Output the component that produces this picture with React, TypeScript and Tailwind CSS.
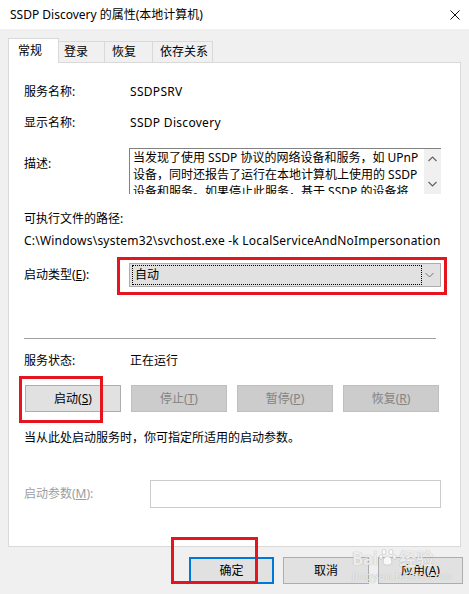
import { ReactNode } from "react";

const FONT = '"Noto Sans", "Noto Sans CJK SC", sans-serif';

function Tab({ label, active, className }: { label: string; active?: boolean; className: string }) {
  return (
    <div
      className={
        active
          ? `relative z-10 -mb-px h-[25px] bg-white border border-[#d9d9d9] border-b-0 flex items-center ${className}`
          : `h-[21px] bg-[#f0f0f0] border border-[#d9d9d9] border-b-0 border-l-0 flex items-center ${className}`
      }
    >
      <span className="text-[12px] leading-none text-black">{label}</span>
    </div>
  );
}

function Btn({
  children,
  disabled,
  className = "w-[96px]",
}: {
  children: ReactNode;
  disabled?: boolean;
  className?: string;
}) {
  return (
    <div
      className={`h-[27px] flex items-center justify-center text-[12px] border ${
        disabled ? "bg-[#cccccc] border-[#bfbfbf] text-[#838383]" : "bg-[#e1e1e1] border-[#adadad] text-black"
      } ${className}`}
    >
      {children}
    </div>
  );
}

function Chevron({ up }: { up?: boolean }) {
  return (
    <svg width="9" height="6" viewBox="0 0 9 6" className="block">
      <path d={up ? "M0.5 5 L4.5 1 L8.5 5" : "M0.5 1 L4.5 5 L8.5 1"} fill="none" stroke="#606060" strokeWidth="1.1" />
    </svg>
  );
}

export default function App() {
  return (
    <div
      className="relative w-[469px] h-[594px] overflow-hidden bg-[#f0f0f0] text-black"
      style={{ fontFamily: FONT }}
    >
      {/* Title bar */}
      <div className="h-[29px] bg-white flex items-center justify-between pl-[10px] pr-[9px]">
        <span className="text-[12px]">SSDP Discovery 的属性(本地计算机)</span>
        <svg width="10" height="10" viewBox="0 0 10 10">
          <path d="M0.5 0.5 L9.5 9.5 M9.5 0.5 L0.5 9.5" stroke="#111" strokeWidth="1" />
        </svg>
      </div>

      {/* Tabs */}
      <div className="mt-[9px] pl-[8px] flex items-end h-[24px]">
        <Tab label="常规" active className="w-[51px] pl-[9px]" />
        <Tab label="登录" className="w-[46px] pl-[5px]" />
        <Tab label="恢复" className="w-[48px] pl-[7px]" />
        <Tab label="依存关系" className="w-[60px] pl-[7px]" />
      </div>

      {/* Panel */}
      <div className="mx-[8px] h-[485px] bg-white border border-[#d9d9d9] pl-[15px] text-[12px] flex flex-col">
        <div className="mt-[19px] h-[20px] flex items-center">
          <span className="w-[106px]">服务名称:</span>
          <span className="tracking-[0.3px]">SSDPSRV</span>
        </div>
        <div className="mt-[11px] h-[20px] flex items-center">
          <span className="w-[106px]">显示名称:</span>
          <span className="tracking-[0.3px]">SSDP Discovery</span>
        </div>

        <div className="mt-[15px] flex items-start">
          <span className="w-[105px] pt-[7px] leading-[18px]">描述:</span>
          <div className="w-[312px] h-[46px] border-t border-l border-[#828282] flex overflow-hidden">
            <div className="flex-1 pl-[3px] leading-[17px] text-[12px] whitespace-nowrap overflow-hidden">
              <div>当发现了使用 SSDP 协议的网络设备和服务，如 UPnP</div>
              <div>设备，同时还报告了运行在本地计算机上使用的 SSDP</div>
              <div>设备和服务。如果停止此服务，基于 SSDP 的设备将</div>
            </div>
            <div className="w-[17px] bg-[#f0f0f0] flex flex-col items-center justify-between pt-[7px] pb-[7px]">
              <Chevron up />
              <Chevron />
            </div>
          </div>
        </div>

        <div className="mt-[15px] h-[20px] flex items-center">可执行文件的路径:</div>
        <div className="mt-[2px] h-[20px] flex items-center whitespace-nowrap tracking-[0.22px]">
          C:\Windows\system32\svchost.exe -k LocalServiceAndNoImpersonation
        </div>

        <div className="mt-[12px] flex items-center">
          <span className="w-[105px]">
            启动类型(<u>E</u>):
          </span>
          <div className="w-[312px] h-[24px] bg-[#e1e1e1] border border-[#adadad] flex items-center pl-[2px] pr-[6px]">
            <div className="w-[290px] h-[20px] border border-dotted border-black flex items-center pl-[2px]">
              自动
            </div>
            <div className="flex-1 flex justify-end">
              <svg width="9" height="6" viewBox="0 0 9 6">
                <path d="M0.5 1 L4.5 5 L8.5 1" fill="none" stroke="#777" strokeWidth="1" />
              </svg>
            </div>
          </div>
        </div>

        <div className="mt-[51px] w-[412px] h-px bg-[#a0a0a0]" />

        <div className="mt-[12px] h-[20px] flex items-center">
          <span className="w-[106px]">服务状态:</span>
          <span>正在运行</span>
        </div>

        <div className="mt-[14px] pl-[1px] flex gap-[10px]">
          <Btn>
            启动(<u>S</u>)
          </Btn>
          <Btn disabled>
            停止(<u>T</u>)
          </Btn>
          <Btn disabled>
            暂停(<u>P</u>)
          </Btn>
          <Btn disabled>
            恢复(<u>R</u>)
          </Btn>
        </div>

        <div className="mt-[16px] h-[20px] flex items-center">当从此处启动服务时，你可指定所适用的启动参数。</div>

        <div className="mt-[32px] flex items-center">
          <span className="w-[126px] text-[#9d9d9d]">
            启动参数(<u>M</u>):
          </span>
          <div className="w-[291px] h-[28px] border border-[#cccccc] bg-white" />
        </div>
      </div>

      {/* Bottom buttons */}
      <div className="mt-[10px] pl-[189px] flex gap-[9px] text-[12px]">
        <div className="w-[85px] h-[27px] bg-[#e1e1e1] border-2 border-[#0078d7] flex items-center justify-center">
          确定
        </div>
        <Btn className="w-[86px]">取消</Btn>
        <Btn className="w-[85px]">
          应用(<u>A</u>)
        </Btn>
      </div>

      {/* Watermark */}
      <div className="absolute left-[352px] top-[548px] pointer-events-none select-none text-white/80 [text-shadow:0_0_1px_#9a9a9a]">
        <div className="flex items-end gap-[2px]">
          <span className="text-[17px] font-bold leading-none tracking-tight">Bai</span>
          <svg width="18" height="18" viewBox="0 0 18 18" className="mb-[1px]">
            <g fill="#ffffff" fillOpacity="0.8" stroke="#b0b0b0" strokeWidth="0.5">
              <ellipse cx="5" cy="4" rx="2" ry="2.6" />
              <ellipse cx="12" cy="4" rx="2" ry="2.6" />
              <ellipse cx="2" cy="9" rx="1.8" ry="2.3" />
              <ellipse cx="15.5" cy="9" rx="1.8" ry="2.3" />
              <path d="M8.5 8 C5 8 3.5 13 4.5 15.5 C5.5 17.5 11.5 17.5 12.5 15.5 C13.5 13 12 8 8.5 8 Z" />
            </g>
          </svg>
          <span className="text-[17px] font-bold leading-none">经验</span>
        </div>
        <div className="text-[11px] leading-none mt-[3px] tracking-wide">jingyan.baidu.com</div>
      </div>

      {/* Red annotation boxes */}
      <div className="absolute left-[117px] top-[257px] w-[330px] h-[38px] border-[3px] border-[#e5141f] pointer-events-none" />
      <div className="absolute left-[19px] top-[376px] w-[84px] h-[47px] border-[3px] border-[#e5141f] pointer-events-none" />
      <div className="absolute left-[171px] top-[537px] w-[87px] h-[47px] border-[3px] border-[#e5141f] pointer-events-none" />
    </div>
  );
}
